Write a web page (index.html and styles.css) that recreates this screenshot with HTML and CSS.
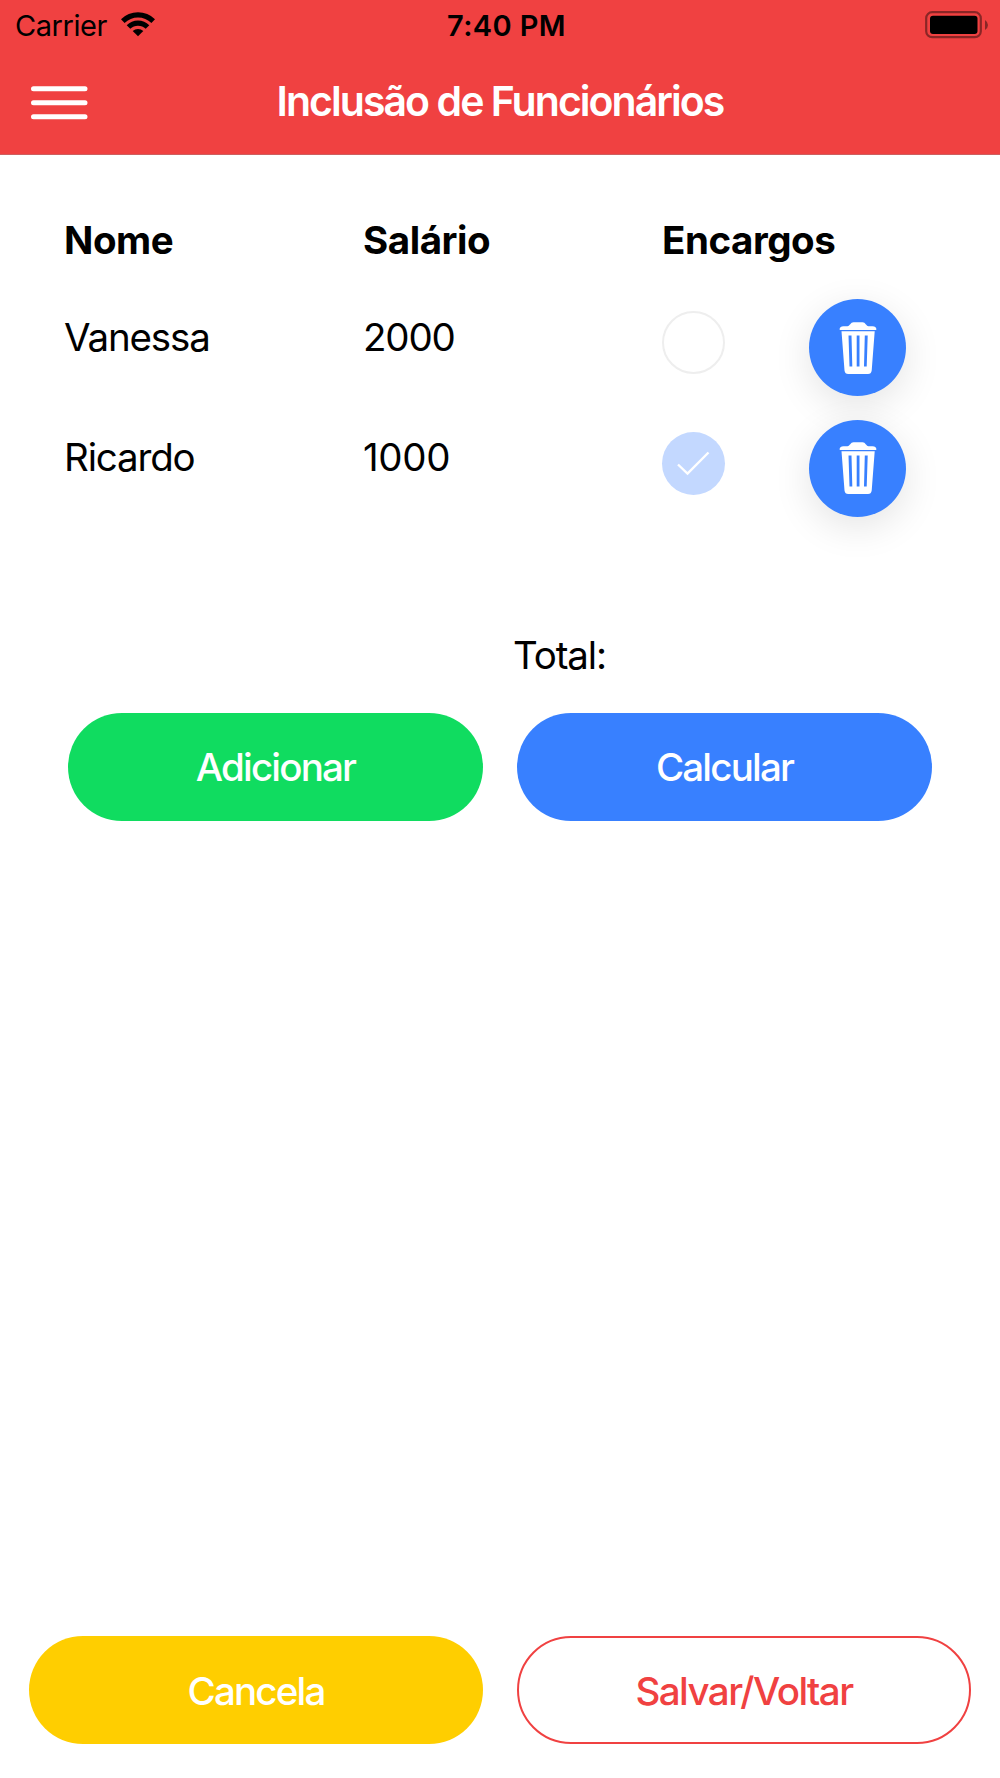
FILE: index.html
```html
<!DOCTYPE html>
<html lang="pt-BR">
  <head>
    <meta charset="UTF-8" />
    <meta name="viewport" content="width=device-width, initial-scale=1.0" />
    <title>Inclusão de Funcionários</title>
    <link rel="stylesheet" href="styles.css">
  </head>

  <body>
    <svg class="symbols" width="0" height="0">
      <symbol id="trash" viewBox="0 0 38 54">
        <path fill="#fff" d="M.7 9C.3 6.500 2 5.300 4.500 5.300H8.500C11 5 11.500 1.300 14.500 1.300H23.500C26.500 1.300 27 5 29.500 5.300H33.500C36 5.300 37.700 6.500 37.300 9Z" />
        <path fill="#fff" fill-rule="evenodd" d="M2.500 10.200H35.700L32.700 49.500Q32.200 53 29 53H9.200Q6 53 5.500 49.500ZM9.500 14.500L10.500 45.500H13.300L12.500 14.500ZM17.700 14.500V45.500H20.500V14.500ZM25.800 14.500L25 45.500H27.700L28.700 14.500Z" />
      </symbol>
    </svg>

    <header>
      <div class="status">
        <div class="carrier">
          <span>Carrier</span>
          <svg width="34" height="25" viewBox="0 0 34 25">
            <path d="M0 7.300A24 24 0 0 1 34 7.300L30.400 11A19 19 0 0 0 3.600 11Z" />
            <path d="M5.700 13.200A16 16 0 0 1 28.300 13.200L24.700 16.800A11 11 0 0 0 9.300 16.800Z" />
            <path d="M11.700 19A7.700 7.700 0 0 1 22.300 19L17 24.300Z" />
          </svg>
        </div>
        <span class="time">7:40 PM</span>
        <svg class="battery" width="64" height="28" viewBox="0 0 64 28">
          <rect x="1.200" y="1.200" width="54.600" height="25" rx="6" fill="none" stroke="#8a2626" stroke-width="2.200" />
          <rect x="5" y="4.700" width="47.500" height="18.300" rx="3" />
          <path fill="#8a2626" d="M60 9Q63 11 63 14Q63 17 60 19Z" />
        </svg>
      </div>
      <div class="toolbar">
        <svg class="menu" width="57" height="34" viewBox="0 0 57 34">
          <path d="M2.500 2.700H54M2.500 16.800H54M2.500 30.700H54" stroke="#fff" stroke-width="5" stroke-linecap="round" />
        </svg>
        <h1>Inclusão de Funcionários</h1>
      </div>
    </header>

    <main>
      <div class="row titles">
        <span>Nome</span>
        <span>Salário</span>
        <span>Encargos</span>
      </div>
      <div class="row">
        <span>Vanessa</span>
        <span>2000</span>
        <span class="check"></span>
        <button class="delete"><svg width="38" height="54"><use href="#trash" /></svg></button>
      </div>
      <div class="row">
        <span>Ricardo</span>
        <span class="narrow">1000</span>
        <span class="check checked">
          <svg width="33" height="25" viewBox="0 0 33 25">
            <path d="M1 13.500L10.500 22.500L31.500 1.500" fill="none" stroke="#fff" stroke-width="2.400" />
          </svg>
        </span>
        <button class="delete"><svg width="38" height="54"><use href="#trash" /></svg></button>
      </div>

      <div class="total">Total:</div>
      <div class="actions">
        <button class="btn green">Adicionar</button>
        <button class="btn blue">Calcular</button>
      </div>
    </main>

    <footer class="actions">
      <button class="btn yellow">Cancela</button>
      <button class="btn outline">Salvar/Voltar</button>
    </footer>
  </body>
</html>
```
FILE: styles.css
```css
* {
  box-sizing: border-box;
}

body {
  margin: 0;
  height: 1778px;
  display: flex;
  flex-direction: column;
  font-family: Inter, sans-serif;
  font-size: 38.5px;
  line-height: 48px;
  letter-spacing: -1.15px;
  color: #000;
  background-color: #fff;
}

svg {
  display: block;
}

.symbols {
  position: absolute;
}

header {
  height: 155px;
  background-color: #f04141;
  border-bottom: 1px solid #cd6060;
}

.status {
  display: grid;
  grid-template-columns: 1fr auto 1fr;
  height: 48px;
  padding: 0 11px 0 15px;
  font-size: 29px;
  line-height: 52px;
}

.carrier {
  display: flex;
  gap: 14px;
  letter-spacing: -0.45px;
}

.carrier svg {
  margin-top: 12px;
}

.time {
  margin-left: 9px;
  font-weight: 600;
  letter-spacing: 0.4px;
}

.battery {
  justify-self: end;
  margin-top: 11px;
}

.toolbar {
  display: grid;
  grid-template-columns: 57px 1fr 57px;
  padding: 0 31px;
}

.menu {
  margin-top: 38px;
}

h1 {
  margin: 29px 0 0;
  color: #fff;
  font-size: 41px;
  font-weight: 600;
  letter-spacing: -1.95px;
  text-align: center;
}

main {
  flex: 1;
  padding: 61px 64px 0;
}

.row {
  display: grid;
  grid-template-columns: 299px 299px 147px 97px;
  height: 120.7px;
  padding-top: 23.5px;
}

.titles {
  height: 73px;
  padding: 0;
  font-weight: 700;
  letter-spacing: -0.45px;
}

.narrow {
  letter-spacing: -0.3px;
}

.check {
  width: 63px;
  height: 63px;
  margin-top: -1.5px;
  border: 2px solid #eee;
  border-radius: 50%;
}

.checked {
  display: flex;
  align-items: center;
  justify-content: center;
  border: none;
  background-color: #c3d8ff;
}

.delete {
  display: flex;
  align-items: center;
  justify-content: center;
  width: 97px;
  height: 97px;
  margin-top: -13.5px;
  padding: 0;
  border: none;
  border-radius: 50%;
  background-color: #3880ff;
  box-shadow: 0 10px 38px rgba(0, 0, 0, 0.11);
}

.total {
  margin: 101px 0 33.5px 449px;
}

.actions {
  display: grid;
  grid-template-columns: 1fr 1fr;
  gap: 34px;
}

main .actions {
  padding: 0 4px;
}

footer {
  padding: 0 29px 34px;
}

.btn {
  height: 108px;
  padding: 1px 0 0;
  border: none;
  border-radius: 54px;
  color: #fff;
  font-family: inherit;
  font-size: 38.5px;
  font-weight: 500;
  letter-spacing: -1.8px;
}

.green {
  background-color: #10dc60;
}

.blue {
  background-color: #3880ff;
}

.yellow {
  background-color: #ffce00;
}

.outline {
  border: 2.4px solid #f04141;
  color: #f04141;
  background-color: #fff;
  letter-spacing: -1.55px;
}
```
